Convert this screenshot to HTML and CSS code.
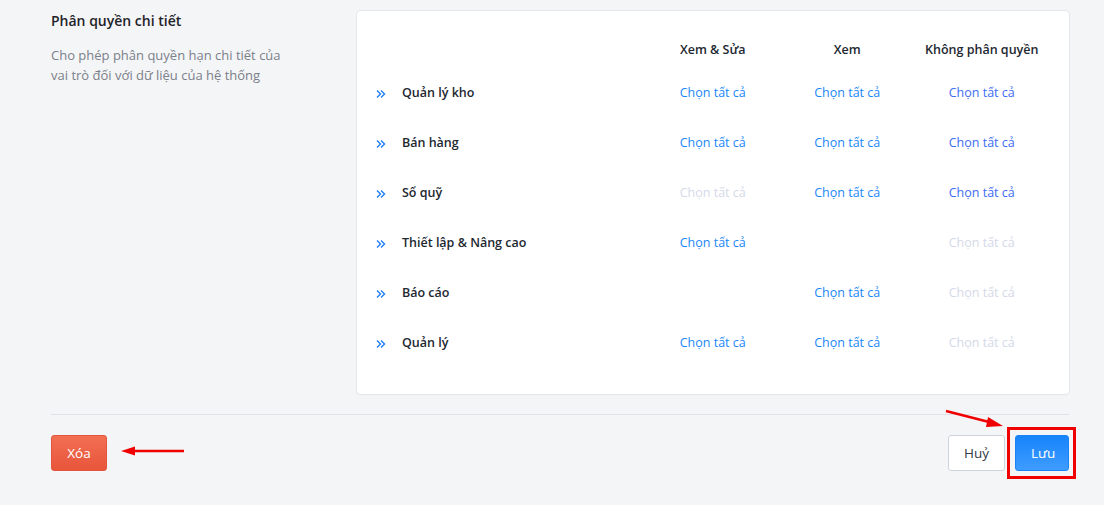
FILE: index.html
```html
<!DOCTYPE html>
<html lang="vi">
<head>
<meta charset="utf-8">
<title>Phân quyền chi tiết</title>
<link rel="stylesheet" href="styles.css">
</head>
<body>
<div class="page">
  <div class="section">
    <div class="intro">
      <h2 class="intro-title">Phân quyền chi tiết</h2>
      <p class="intro-desc">Cho phép phân quyền hạn chi tiết của vai trò đối với dữ liệu của hệ thống</p>
    </div>
    <div class="card">
      <div class="grid">
        <div class="cell head"></div>
        <div class="cell head center">Xem &amp; Sửa</div>
        <div class="cell head center">Xem</div>
        <div class="cell head center">Không phân quyền</div>

        <div class="cell name"><svg class="chev" viewBox="0 0 10 10"><path d="M1 1.5 L4.5 5 L1 8.5 M5 1.5 L8.5 5 L5 8.5" fill="none" stroke="#1e7ef5" stroke-width="1.4"/></svg>Quản lý kho</div>
        <div class="cell center"><span class="link">Chọn tất cả</span></div>
        <div class="cell center"><span class="link">Chọn tất cả</span></div>
        <div class="cell center"><span class="link alt">Chọn tất cả</span></div>

        <div class="cell name"><svg class="chev" viewBox="0 0 10 10"><path d="M1 1.5 L4.5 5 L1 8.5 M5 1.5 L8.5 5 L5 8.5" fill="none" stroke="#1e7ef5" stroke-width="1.4"/></svg>Bán hàng</div>
        <div class="cell center"><span class="link">Chọn tất cả</span></div>
        <div class="cell center"><span class="link">Chọn tất cả</span></div>
        <div class="cell center"><span class="link alt">Chọn tất cả</span></div>

        <div class="cell name"><svg class="chev" viewBox="0 0 10 10"><path d="M1 1.5 L4.5 5 L1 8.5 M5 1.5 L8.5 5 L5 8.5" fill="none" stroke="#1e7ef5" stroke-width="1.4"/></svg>Sổ quỹ</div>
        <div class="cell center"><span class="link off">Chọn tất cả</span></div>
        <div class="cell center"><span class="link">Chọn tất cả</span></div>
        <div class="cell center"><span class="link alt">Chọn tất cả</span></div>

        <div class="cell name"><svg class="chev" viewBox="0 0 10 10"><path d="M1 1.5 L4.5 5 L1 8.5 M5 1.5 L8.5 5 L5 8.5" fill="none" stroke="#1e7ef5" stroke-width="1.4"/></svg>Thiết lập &amp; Nâng cao</div>
        <div class="cell center"><span class="link">Chọn tất cả</span></div>
        <div class="cell center"></div>
        <div class="cell center"><span class="link off">Chọn tất cả</span></div>

        <div class="cell name"><svg class="chev" viewBox="0 0 10 10"><path d="M1 1.5 L4.5 5 L1 8.5 M5 1.5 L8.5 5 L5 8.5" fill="none" stroke="#1e7ef5" stroke-width="1.4"/></svg>Báo cáo</div>
        <div class="cell center"></div>
        <div class="cell center"><span class="link">Chọn tất cả</span></div>
        <div class="cell center"><span class="link off">Chọn tất cả</span></div>

        <div class="cell name"><svg class="chev" viewBox="0 0 10 10"><path d="M1 1.5 L4.5 5 L1 8.5 M5 1.5 L8.5 5 L5 8.5" fill="none" stroke="#1e7ef5" stroke-width="1.4"/></svg>Quản lý</div>
        <div class="cell center"><span class="link">Chọn tất cả</span></div>
        <div class="cell center"><span class="link">Chọn tất cả</span></div>
        <div class="cell center"><span class="link off">Chọn tất cả</span></div>
      </div>
    </div>
  </div>

  <div class="footer">
    <button class="btn btn-danger">Xóa</button>
    <div class="footer-right">
      <button class="btn btn-default">Huỷ</button>
      <button class="btn btn-primary">Lưu</button>
    </div>
  </div>
</div>

<div class="annot-box"></div>
<svg class="annot-arrow-left" width="66" height="14" viewBox="0 0 66 14">
  <line x1="64" y1="7" x2="12" y2="7" stroke="#f00000" stroke-width="2.5"/>
  <path d="M1 7 L15 2.5 L15 11.5 Z" fill="#f00000"/>
</svg>
<svg class="annot-arrow-right" width="62" height="24" viewBox="0 0 62 24">
  <line x1="1" y1="3" x2="46" y2="14.5" stroke="#f00000" stroke-width="2.5"/>
  <path d="M58 18 L43 9 L41 19 Z" fill="#f00000"/>
</svg>
</body>
</html>
```

FILE: styles.css
```css
* { box-sizing: border-box; }

html, body {
  margin: 0;
  padding: 0;
  background: #f4f5f7;
  font-family: "Open Sans", "Noto Sans", "Liberation Sans", sans-serif;
  color: #222831;
}

.page {
  padding: 11px 35px 0 51px;
}

.section {
  display: flex;
  align-items: flex-start;
}

.intro {
  width: 306px;
  flex: none;
  padding-right: 50px;
}

.intro-title {
  margin: 0;
  font-size: 14px;
  line-height: 19px;
  font-weight: 600;
  color: #1f2329;
}

.intro-desc {
  margin: 15px 0 0;
  max-width: 245px;
  font-size: 13px;
  line-height: 20px;
  color: #7b808a;
}

.card {
  flex: 1;
  background: #fff;
  border-radius: 4px;
  box-shadow: 0 0 0 1px #e4e6ea, 0 1px 2px rgba(0,0,0,0.06);
  padding: 20px 20px 27px 19px;
}

.grid {
  display: grid;
  grid-template-columns: 1fr 134.5px 134.5px 134.5px;
  grid-template-rows: 36px;
  grid-auto-rows: 50px;
}

.cell {
  display: flex;
  align-items: center;
  font-size: 12.5px;
  white-space: nowrap;
}

.cell.head {
  font-weight: 600;
  color: #222831;
  padding-top: 1px;
}

.center { justify-content: center; }

.name {
  font-weight: 600;
  color: #222831;
}

.chev {
  width: 10px;
  height: 10px;
  margin-top: 3px;
  margin-right: 16px;
  flex: none;
}

.link { color: #1a87f7; cursor: pointer; }
.link.alt { color: #3d6cf2; }
.link.off { color: #d4d9e8; }

.footer {
  margin-top: 20px;
  border-top: 1px solid #e1e3e8;
  padding-top: 20px;
  display: flex;
  justify-content: space-between;
  align-items: center;
}

.footer-right {
  display: flex;
  gap: 10px;
}

.btn {
  height: 36px;
  border-radius: 3px;
  font-family: inherit;
  font-size: 13.5px;
  padding: 0 15px;
  cursor: pointer;
}

.btn-danger {
  width: 56px;
  color: #fff;
  border: 1px solid #e2553c;
  background: linear-gradient(#f26f54, #e8553b);
}

.btn-default {
  width: 57px;
  color: #333a44;
  border: 1px solid #cdd4dd;
  background: #fff;
}

.btn-primary {
  width: 54px;
  color: #fff;
  border: 1px solid #1a84f7;
  background: linear-gradient(#1784fa, #3e9cff);
}

.annot-box {
  position: absolute;
  left: 1007px;
  top: 427px;
  width: 69px;
  height: 52px;
  border: 3px solid #f00000;
}

.annot-arrow-left {
  position: absolute;
  left: 120px;
  top: 444px;
}

.annot-arrow-right {
  position: absolute;
  left: 945px;
  top: 408px;
}
```
